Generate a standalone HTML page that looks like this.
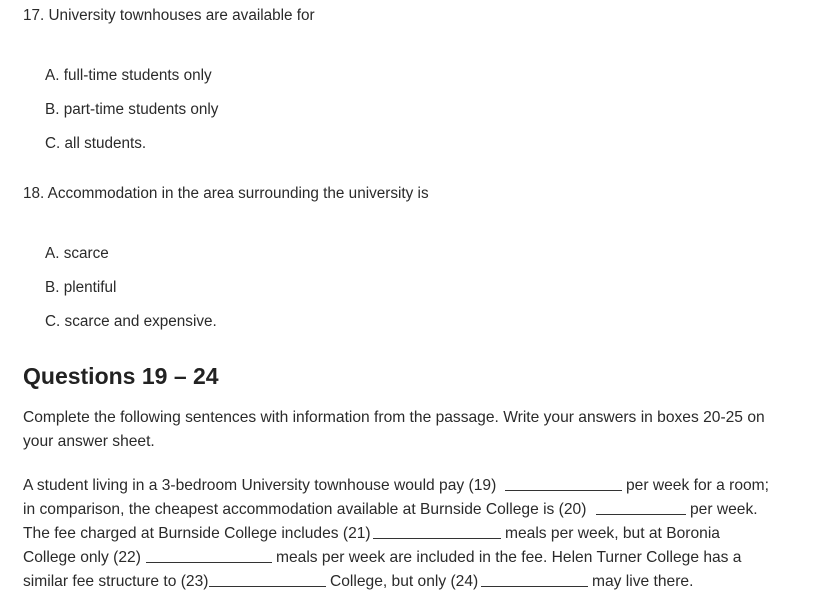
<!DOCTYPE html>
<html><head><style>
body{margin:0;width:818px;height:611px;background:#fff;font-family:"Liberation Sans",sans-serif;color:#2a2a2a;font-size:15.6px;position:relative;overflow:hidden}
.t{position:absolute;white-space:nowrap;line-height:18px}
.s{font-size:15.3px}
.b{position:absolute;height:0;border-bottom:1px solid #333}
h2{position:absolute;left:23px;top:362px;margin:0;font-size:23px;font-weight:bold;color:#222;line-height:28px}
</style></head><body>
<div class="t s" style="left:23px;top:7px">17. University townhouses are available for</div>
<div class="t s" style="left:45px;top:67px">A. full-time students only</div>
<div class="t s" style="left:45px;top:101px">B. part-time students only</div>
<div class="t s" style="left:45px;top:135px">C. all students.</div>
<div class="t s" style="left:23px;top:185px">18. Accommodation in the area surrounding the university is</div>
<div class="t s" style="left:45px;top:245px">A. scarce</div>
<div class="t s" style="left:45px;top:279px">B. plentiful</div>
<div class="t s" style="left:45px;top:313px">C. scarce and expensive.</div>
<h2>Questions 19 – 24</h2>
<div class="t" style="left:23px;top:409px">Complete the following sentences with information from the passage. Write your answers in boxes 20-25 on</div>
<div class="t" style="left:23px;top:433px">your answer sheet.</div>

<div class="t" style="left:23px;top:477px">A student living in a 3-bedroom University townhouse would pay (19)</div>
<div class="b" style="left:505px;width:117px;top:490px"></div>
<div class="t" style="left:626px;top:477px">per week for a room;</div>

<div class="t" style="left:23px;top:501px">in comparison, the cheapest accommodation available at Burnside College is (20)</div>
<div class="b" style="left:596px;width:90px;top:514px"></div>
<div class="t" style="left:690px;top:501px">per week.</div>

<div class="t" style="left:23px;top:525px">The fee charged at Burnside College includes (21)</div>
<div class="b" style="left:373px;width:128px;top:538px"></div>
<div class="t" style="left:505px;top:525px">meals per week, but at Boronia</div>

<div class="t" style="left:23px;top:549px">College only (22)</div>
<div class="b" style="left:146px;width:126px;top:562px"></div>
<div class="t" style="left:276px;top:549px">meals per week are included in the fee. Helen Turner College has a</div>

<div class="t" style="left:23px;top:573px">similar fee structure to (23)</div>
<div class="b" style="left:209px;width:117px;top:586px"></div>
<div class="t" style="left:330px;top:573px">College, but only (24)</div>
<div class="b" style="left:481px;width:107px;top:586px"></div>
<div class="t" style="left:592px;top:573px">may live there.</div>
</body></html>
